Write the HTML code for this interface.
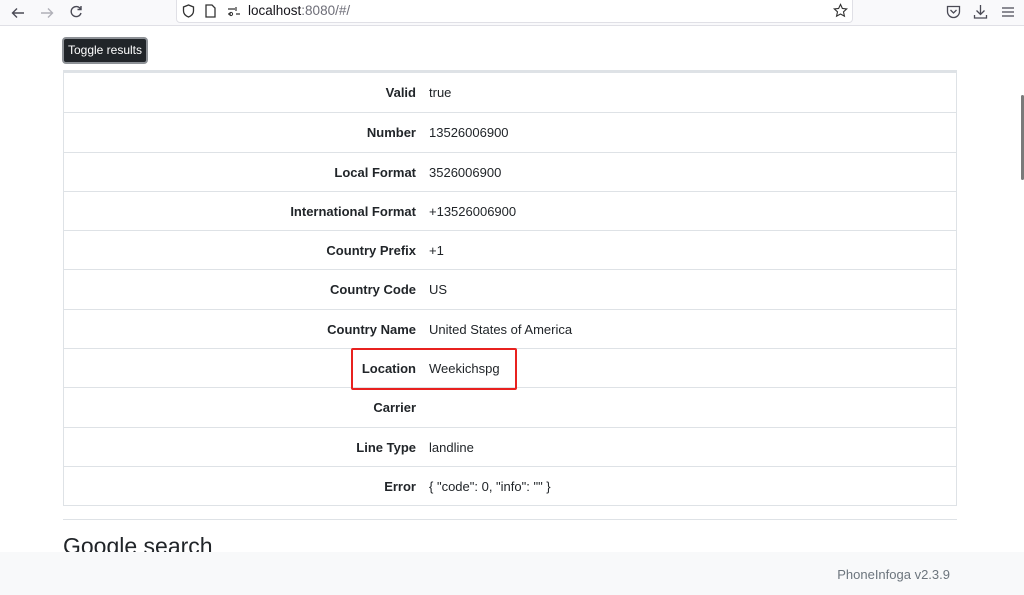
<!DOCTYPE html>
<html><head><meta charset="utf-8"><style>
*{margin:0;padding:0;box-sizing:border-box}
body{width:1024px;height:595px;overflow:hidden;background:#fff;font-family:"Liberation Sans",Arial,sans-serif;color:#212529;position:relative}
.tb{position:absolute;left:0;top:0;width:1024px;height:26px;background:#f9f9fb;border-bottom:1px solid #e0e0e6}
.url{position:absolute;left:176px;top:-4px;width:677px;height:27px;background:#fff;border:1px solid #e0e0e6;border-radius:4px}
.ic{position:absolute;color:#4a4a55;font-size:15px}
.tbl{position:absolute;left:63px;top:70px;width:894px;border:1px solid #dee2e6;border-top:3px solid #dee2e6}
.row{height:39.3px;border-top:1px solid #dee2e6;position:relative;font-size:13px}
.row:first-child{border-top:none}
.row .l{position:absolute;right:540px;top:12px;font-weight:bold}
.row .v{position:absolute;left:365px;top:12px}
</style></head><body>
<div class="tb">
<svg class="ic" style="left:10px;top:5px" width="16" height="16" viewBox="0 0 16 16"><path d="M14 8H3M7 3.5L2.5 8 7 12.5" fill="none" stroke="#4a4a55" stroke-width="1.4"/></svg>
<svg style="position:absolute;left:39px;top:5px" width="16" height="16" viewBox="0 0 16 16"><path d="M2 8h11M9 3.5L13.5 8 9 12.5" fill="none" stroke="#b0b0b8" stroke-width="1.4"/></svg>
<svg style="position:absolute;left:68px;top:4px" width="16" height="16" viewBox="0 0 16 16"><path d="M12.5 5A5 5 0 1 0 13 9M13 2v3.5H9.5" fill="none" stroke="#4a4a55" stroke-width="1.4"/></svg>
<div class="url">
<svg style="position:absolute;left:5px;top:7px" width="13" height="14" viewBox="0 0 13 14"><path d="M6.5 1L1.5 3v4c0 3 2.5 5 5 6 2.5-1 5-3 5-6V3z" fill="none" stroke="#333" stroke-width="1.3"/></svg>
<svg style="position:absolute;left:28px;top:7px" width="11" height="14" viewBox="0 0 11 14"><path d="M1 1h6l3 3v9H1z" fill="none" stroke="#333" stroke-width="1.3"/></svg>
<svg style="position:absolute;left:50px;top:8px" width="14" height="12" viewBox="0 0 14 12"><path d="M1 4h7M1 9h3M9 9h4M9 2v4" fill="none" stroke="#333" stroke-width="1.2"/><circle cx="4" cy="9" r="1.6" fill="none" stroke="#333"/></svg>
<span style="position:absolute;left:71px;top:6px;font-size:13.5px;color:#15141a">localhost<span style="color:#6e6e78">:8080/#/</span></span>
<svg style="position:absolute;left:656px;top:6px" width="15" height="15" viewBox="0 0 16 16"><path d="M8 1.5l2 4.3 4.6.5-3.4 3.1 1 4.6L8 11.7 3.8 14l1-4.6L1.4 6.3 6 5.8z" fill="none" stroke="#333" stroke-width="1.2"/></svg>
</div>
<svg style="position:absolute;left:946px;top:5px" width="15" height="14" viewBox="0 0 15 14"><path d="M1.5 1.5h12v5a6 6 0 0 1-12 0z M4.5 5l3 3 3-3" fill="none" stroke="#4a4a55" stroke-width="1.3"/></svg>
<svg style="position:absolute;left:973px;top:4px" width="15" height="16" viewBox="0 0 15 16"><path d="M7.5 1v9M3.5 6.5l4 4 4-4M1.5 11v3h12v-3" fill="none" stroke="#4a4a55" stroke-width="1.3"/></svg>
<svg style="position:absolute;left:1001px;top:5px" width="14" height="14" viewBox="0 0 14 14"><path d="M1 3h12M1 7h12M1 11h12" stroke="#4a4a55" stroke-width="1.3"/></svg>
</div>
<div style="position:absolute;left:1021px;top:95px;width:3px;height:85px;background:#7a7a7a;border-radius:2px"></div>
<div style="position:absolute;left:62px;top:37px;width:86px;height:27px;background:#212529;border:2px solid #8d9196;border-radius:4px;color:#fff;font-size:12px;line-height:22px;text-align:center">Toggle results</div>
<div class="tbl">
<div class="row"><span class="l">Valid</span><span class="v">true</span></div>
<div class="row"><span class="l">Number</span><span class="v">13526006900</span></div>
<div class="row"><span class="l">Local Format</span><span class="v">3526006900</span></div>
<div class="row"><span class="l">International Format</span><span class="v">+13526006900</span></div>
<div class="row"><span class="l">Country Prefix</span><span class="v">+1</span></div>
<div class="row"><span class="l">Country Code</span><span class="v">US</span></div>
<div class="row"><span class="l">Country Name</span><span class="v">United States of America</span></div>
<div class="row"><span class="l">Location</span><span class="v">Weekichspg</span></div>
<div class="row"><span class="l">Carrier</span><span class="v"></span></div>
<div class="row"><span class="l">Line Type</span><span class="v">landline</span></div>
<div class="row"><span class="l">Error</span><span class="v">{ "code": 0, "info": "" }</span></div>
</div>
<div style="position:absolute;left:351px;top:348px;width:166px;height:42px;border:2px solid #e8211f;border-radius:2px"></div>
<div style="position:absolute;left:63px;top:519px;width:894px;height:1px;background:#dee2e6"></div>
<div style="position:absolute;left:63px;top:533px;font-size:23px;color:#212529">Google search</div>
<div style="position:absolute;left:0;top:552px;width:1024px;height:43px;background:#f8f9fa"></div>
<div style="position:absolute;right:74px;top:567px;font-size:13px;color:#6c757d">PhoneInfoga v2.3.9</div>
</body></html>
